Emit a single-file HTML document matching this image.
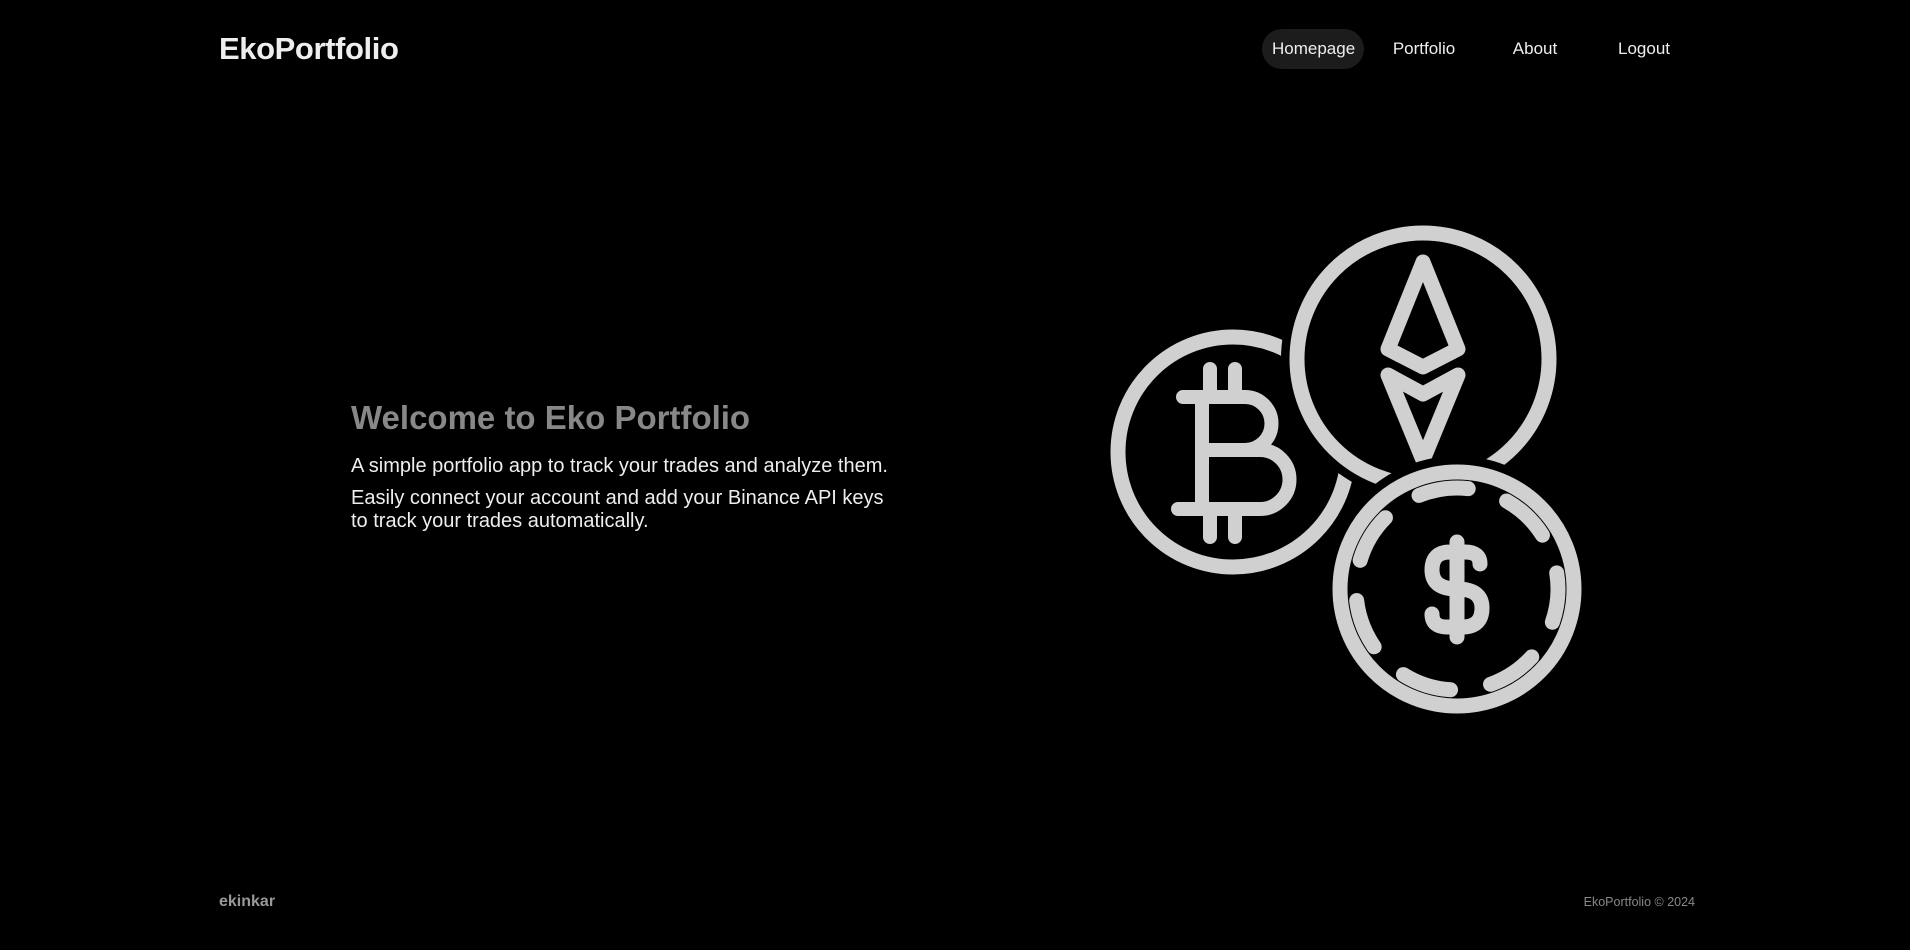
<!DOCTYPE html>
<html><head><meta charset="utf-8"><style>
html,body{margin:0;padding:0;background:#000;width:1910px;height:950px;overflow:hidden;font-family:"Liberation Sans",sans-serif;}
.logo{position:absolute;left:219px;top:31px;font-size:31px;font-weight:bold;color:#eee;letter-spacing:-0.4px}
.nav a{position:absolute;top:29px;height:40px;line-height:40px;color:#eee;font-size:17px;text-decoration:none;transform:translateX(-50%);padding:0 10px;border-radius:20px}
.h1{position:absolute;left:351px;top:399px;font-size:33px;font-weight:bold;color:#888}
.p{position:absolute;left:351px;color:#eee;font-size:20px;line-height:23px}
.f1{position:absolute;left:219px;top:893px;font-size:16px;font-weight:bold;color:#999}
.f2{position:absolute;right:215px;top:895px;font-size:12.5px;color:#888}
</style></head><body>
<div class="logo">EkoPortfolio</div>
<div class="nav">
<a style="left:1313px;background:#1c1c1c;width:82px;text-align:center">Homepage</a>
<a style="left:1424px">Portfolio</a>
<a style="left:1535px">About</a>
<a style="left:1644px">Logout</a>
</div>
<div class="h1">Welcome to Eko Portfolio</div>
<div class="p" style="top:455px">A simple portfolio app to track your trades and analyze them.</div>
<div class="p" style="top:487px">Easily connect your account and add your Binance API keys<br>to track your trades automatically.</div>
<div class="f1">ekinkar</div>
<div class="f2">EkoPortfolio © 2024</div>
<svg width="1910" height="950" style="position:absolute;left:0;top:0" fill="none" stroke-linecap="round" stroke-linejoin="round">
<g stroke="#d0d0d0" stroke-width="15">
<circle cx="1233" cy="452" r="115" fill="#000"/>
<path d="M1183 397H1245A26.5 26.5 0 0 1 1245 450H1202M1202 397V509M1240 450H1260A29.5 29.5 0 0 1 1260 509H1178M1210 369V397M1235 369V397M1210 509V537M1235 509V537" stroke-width="14"/>
</g>
<circle cx="1423" cy="359" r="126" fill="#000" stroke="#000" stroke-width="32"/>
<g stroke="#d0d0d0" stroke-width="15">
<circle cx="1423" cy="359" r="126"/>
<path d="M1423 262L1388 349L1423 367L1458 349Z"/>
<path d="M1388 375L1423 394L1458 375L1423 460Z"/>
</g>
<circle cx="1457" cy="589" r="117" fill="#000" stroke="#000" stroke-width="32"/>
<g stroke="#d0d0d0" stroke-width="15">
<circle cx="1457" cy="589" r="117"/>
<circle cx="1457" cy="589" r="101" stroke-dasharray="50 40.6" transform="rotate(-112 1457 589)"/>
<path d="M1457 542V637M1480 564Q1480 552 1465 552H1450Q1432 552 1432 570Q1432 589 1457 589Q1482 589 1482 608Q1482 627 1462 627H1447Q1432 627 1432 614"/>
</g>
</svg>
</body></html>
